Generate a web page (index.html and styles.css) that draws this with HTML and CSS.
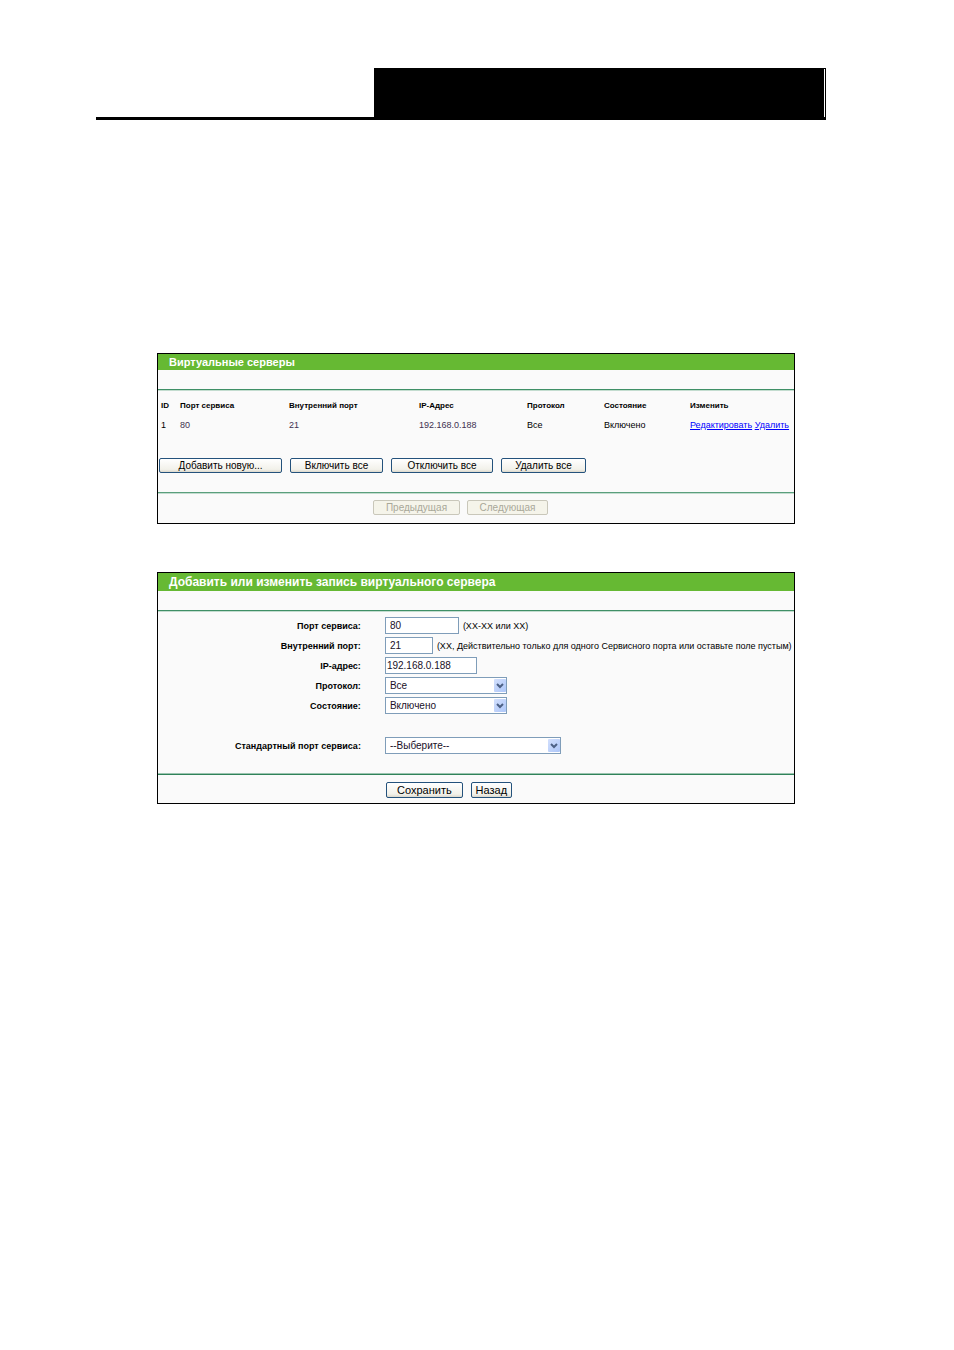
FILE: index.html
```
<!DOCTYPE html>
<html lang="ru">
<head>
    <meta charset="UTF-8">
    <meta name="viewport" content="width=device-width, initial-scale=1.0">
    <title>Виртуальные серверы</title>
    <link rel="stylesheet" href="styles.css">
</head>

<body>
    <header class="page-head">
        <div class="page-head-box"></div>
    </header>

    <main class="content">

        <!-- список серверов -->
        <section class="panel">
            <h2 class="panel-title">Виртуальные серверы</h2>
            <div class="strip"></div>

            <div class="list">
                <table class="servers">
                    <colgroup>
                        <col class="col-id">
                        <col class="col-port">
                        <col class="col-inner">
                        <col class="col-ip">
                        <col class="col-proto">
                        <col class="col-state">
                        <col>
                    </colgroup>
                    <thead>
                        <tr>
                            <th>ID</th>
                            <th>Порт сервиса</th>
                            <th>Внутренний порт</th>
                            <th>IP-Адрес</th>
                            <th>Протокол</th>
                            <th>Состояние</th>
                            <th>Изменить</th>
                        </tr>
                    </thead>
                    <tbody>
                        <tr>
                            <td>1</td>
                            <td class="num">80</td>
                            <td class="num">21</td>
                            <td class="num">192.168.0.188</td>
                            <td>Все</td>
                            <td>Включено</td>
                            <td><a href="#edit">Редактировать</a> <a href="#delete">Удалить</a></td>
                        </tr>
                    </tbody>
                </table>

                <div class="actions">
                    <button type="button" class="btn btn-add">Добавить новую...</button>
                    <button type="button" class="btn btn-on">Включить все</button>
                    <button type="button" class="btn btn-off">Отключить все</button>
                    <button type="button" class="btn btn-del">Удалить все</button>
                </div>
            </div>

            <div class="pager">
                <button type="button" class="btn btn-prev" disabled>Предыдущая</button>
                <button type="button" class="btn btn-next" disabled>Следующая</button>
            </div>
        </section>

        <!-- форма записи -->
        <section class="panel" id="edit">
            <h2 class="panel-title panel-title-tall">Добавить или изменить запись виртуального сервера</h2>
            <div class="strip"></div>

            <form>
                <div class="fields">
                    <div class="row">
                        <label for="port">Порт сервиса:</label>
                        <input type="text" id="port" class="w-port" value="80">
                        <span class="hint">(XX-XX или XX)</span>
                    </div>
                    <div class="row">
                        <label for="inner">Внутренний порт:</label>
                        <input type="text" id="inner" class="w-inner" value="21">
                        <span class="hint">(XX, Действительно только для одного Сервисного порта или оставьте поле пустым)</span>
                    </div>
                    <div class="row">
                        <label for="ip">IP-адрес:</label>
                        <input type="text" id="ip" class="w-ip" value="192.168.0.188">
                    </div>
                    <div class="row">
                        <label for="proto">Протокол:</label>
                        <div class="select w-select">
                            <select id="proto">
                                <option>Все</option>
                                <option>TCP</option>
                                <option>UDP</option>
                            </select>
                            <svg class="arrow" viewBox="0 0 12 13"><path d="M3 5l3 3 3-3" /></svg>
                        </div>
                    </div>
                    <div class="row">
                        <label for="state">Состояние:</label>
                        <div class="select w-select">
                            <select id="state">
                                <option>Включено</option>
                                <option>Отключено</option>
                            </select>
                            <svg class="arrow" viewBox="0 0 12 13"><path d="M3 5l3 3 3-3" /></svg>
                        </div>
                    </div>
                    <div class="row row-common">
                        <label for="common">Стандартный порт сервиса:</label>
                        <div class="select w-common">
                            <select id="common">
                                <option>--Выберите--</option>
                                <option>HTTP</option>
                                <option>FTP</option>
                            </select>
                            <svg class="arrow" viewBox="0 0 12 13"><path d="M3 5l3 3 3-3" /></svg>
                        </div>
                    </div>
                </div>

                <div class="form-actions">
                    <button type="submit" class="btn btn-save">Сохранить</button>
                    <button type="button" class="btn btn-back">Назад</button>
                </div>
            </form>
        </section>

    </main>
</body>
</html>
```

FILE: styles.css
```
* {
    box-sizing: border-box;
}

body {
    margin: 0;
    padding: 68px 128px 68px 96px;
    background: white;
    color: black;
    font: 9px/12px "Liberation Sans", Arial, sans-serif;
}

/* шапка */
.page-head {
    display: flex;
    justify-content: flex-end;
    border-bottom: 3px solid black;
}

.page-head-box {
    width: 61.9%;
    height: 49px;
    border: 1px solid black;
    border-bottom: 0;
    background: linear-gradient(black, black) no-repeat left / calc(100% - 1px) 100%;
}

.content {
    display: flex;
    flex-direction: column;
    gap: 48px;
    padding: 233px 31px 0 61px;
}

.panel {
    border: 1px solid black;
    background: #fafafa;
}

.panel-title {
    margin: 0;
    padding-left: 11px;
    background: #66b933;
    color: white;
    font-size: 11px;
    line-height: 16px;
}

.panel-title-tall {
    font-size: 12px;
    line-height: 18px;
}

.strip {
    height: 20px;
    border-bottom: 1px solid #3f8f66;
    box-shadow: 0 1px #c3dccf;
}

/* таблица */
.list {
    padding: 6px 1px 19px;
    border-bottom: 1px solid #5a9f7c;
    box-shadow: 0 1px #c3dccf;
}

.servers {
    width: 100%;
    table-layout: fixed;
    border-collapse: collapse;
}

.servers th,
.servers td {
    height: 19px;
    padding: 0 0 0 2px;
    text-align: left;
    white-space: nowrap;
}

.servers th {
    font-size: 8px;
}

.col-id { width: 19px; }
.col-port { width: 109px; }
.col-inner { width: 130px; }
.col-ip { width: 108px; }
.col-proto { width: 77px; }
.col-state { width: 86px; }

.num {
    color: #403050;
}

a {
    color: #0000ff;
}

/* кнопки */
.btn {
    height: 15px;
    padding: 0;
    border: 1px solid #24527c;
    border-radius: 2px;
    background: linear-gradient(white, #f2f1ea 80%, #dcd8cc);
    color: black;
    font: 10px/12px "Liberation Sans", Arial, sans-serif;
    white-space: nowrap;
}

.btn:disabled {
    border-color: #c9c7ba;
    background: #f5f4ea;
    color: #a9a899;
}

.actions {
    display: flex;
    gap: 8px;
    margin-top: 24px;
}

.btn-add { width: 123px; }
.btn-on { width: 93px; }
.btn-off { width: 102px; }
.btn-del { width: 85px; }
.btn-prev { width: 87px; }
.btn-next { width: 81px; }
.btn-save { width: 77px; }
.btn-back { width: 41px; }

.pager {
    display: flex;
    justify-content: center;
    gap: 7px;
    padding: 7px 0 8px;
    margin-right: 31px;
}

/* форма */
.fields {
    display: flex;
    flex-direction: column;
    gap: 3px;
    padding: 6px 0 20px;
    border-bottom: 1px solid #2f8259;
    box-shadow: inset 0 -1px #9cc4b0;
}

.row {
    display: flex;
    align-items: center;
    height: 17px;
}

.row label {
    width: 31.9%;
    margin-right: 24px;
    font-weight: bold;
    text-align: right;
}

.row-common {
    margin-top: 20px;
}

.row input,
.row select {
    height: 17px;
    padding: 0 4px;
    border: 1px solid #7f9db9;
    border-radius: 0;
    background: white;
    color: #201028;
    font: 10px/15px "Liberation Sans", Arial, sans-serif;
}

.row select {
    width: 100%;
    appearance: none;
}

.row .w-ip {
    padding: 0 1px;
}

.w-port { width: 74px; }
.w-inner { width: 48px; }
.w-ip { width: 92px; }
.w-select { width: 122px; }
.w-common { width: 176px; }

.hint {
    margin-left: 4px;
    white-space: nowrap;
}

.select {
    display: flex;
    position: relative;
}

/* стрелка списка */
.arrow {
    position: absolute;
    top: 2px;
    right: 1px;
    width: 12px;
    height: 13px;
    border-radius: 1px;
    background: linear-gradient(135deg, #d3e0fd, #adc6f8);
    fill: none;
    stroke: #4d6185;
    stroke-width: 2;
    pointer-events: none;
}

.form-actions {
    display: flex;
    gap: 8px;
    padding: 7px 0 5px calc(31.9% + 25px);
}

.form-actions .btn {
    height: 16px;
    font-size: 11px;
}
```
